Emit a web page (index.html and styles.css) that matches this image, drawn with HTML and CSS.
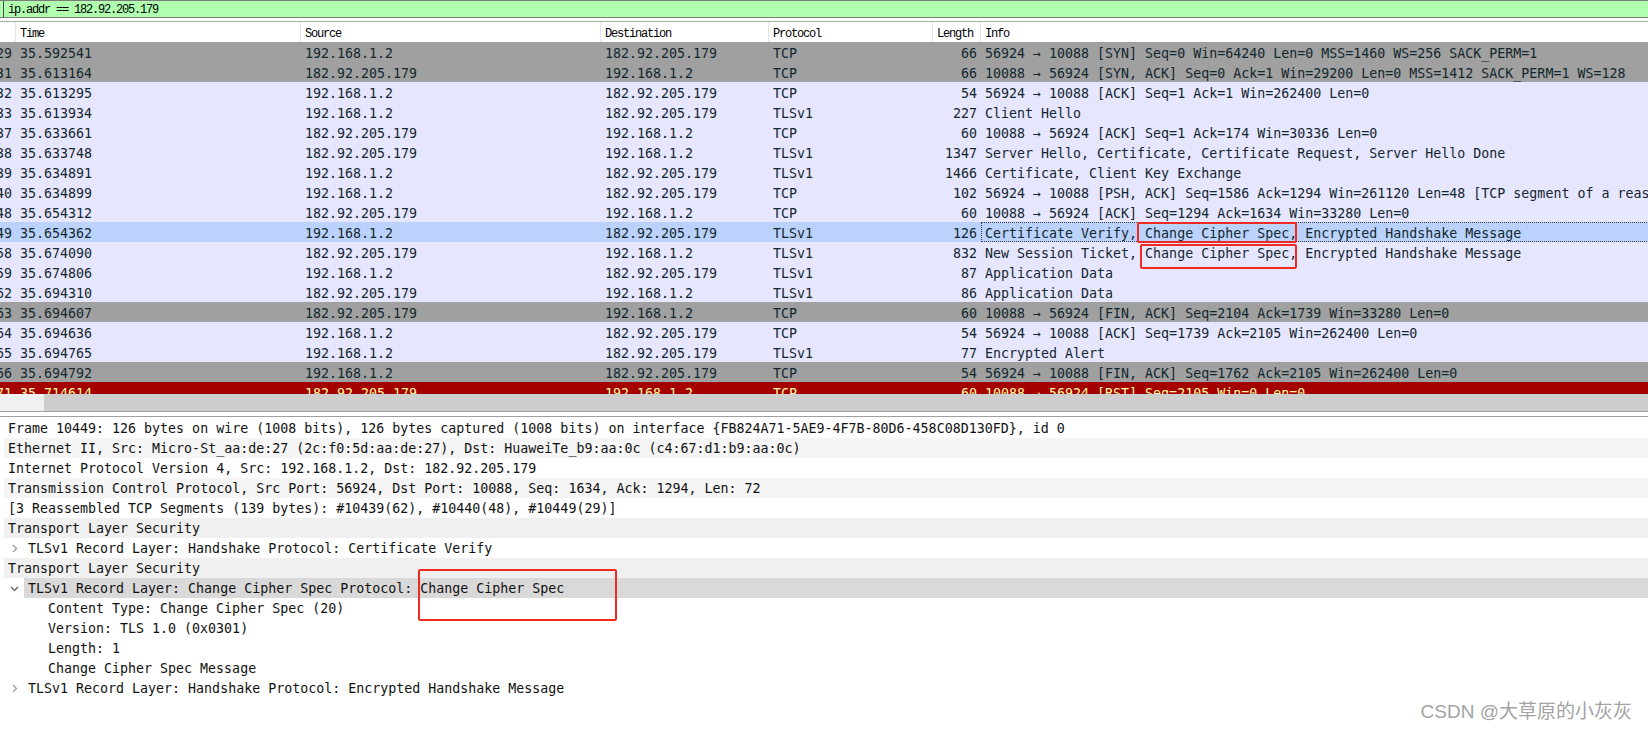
FILE: index.html
```html
<!DOCTYPE html>
<html>
<head>
<meta charset="utf-8">
<title>Wireshark</title>
<link rel="stylesheet" href="styles.css">
</head>
<body>
<div class="filter"><span class="filter-edge"></span><span class="filter-text">ip.addr == 182.92.205.179</span></div>
<div class="spacer"></div>
<div class="list">
  <div class="header">
    <div class="hc c-no"></div>
    <div class="hc c-time">Time</div>
    <div class="hc c-src">Source</div>
    <div class="hc c-dst">Destination</div>
    <div class="hc c-proto">Protocol</div>
    <div class="hc c-len">Length</div>
    <div class="hc c-info">Info</div>
  </div>
  <div class="rows">
    <div class="row gray"><div class="c-no"><span>10429</span></div><div class="c-time">35.592541</div><div class="c-src">192.168.1.2</div><div class="c-dst">182.92.205.179</div><div class="c-proto">TCP</div><div class="c-len">66</div><div class="c-info">56924 → 10088 [SYN] Seq=0 Win=64240 Len=0 MSS=1460 WS=256 SACK_PERM=1</div></div>
    <div class="row gray"><div class="c-no"><span>10431</span></div><div class="c-time">35.613164</div><div class="c-src">182.92.205.179</div><div class="c-dst">192.168.1.2</div><div class="c-proto">TCP</div><div class="c-len">66</div><div class="c-info">10088 → 56924 [SYN, ACK] Seq=0 Ack=1 Win=29200 Len=0 MSS=1412 SACK_PERM=1 WS=128</div></div>
    <div class="row light"><div class="c-no"><span>10432</span></div><div class="c-time">35.613295</div><div class="c-src">192.168.1.2</div><div class="c-dst">182.92.205.179</div><div class="c-proto">TCP</div><div class="c-len">54</div><div class="c-info">56924 → 10088 [ACK] Seq=1 Ack=1 Win=262400 Len=0</div></div>
    <div class="row light"><div class="c-no"><span>10433</span></div><div class="c-time">35.613934</div><div class="c-src">192.168.1.2</div><div class="c-dst">182.92.205.179</div><div class="c-proto">TLSv1</div><div class="c-len">227</div><div class="c-info">Client Hello</div></div>
    <div class="row light"><div class="c-no"><span>10437</span></div><div class="c-time">35.633661</div><div class="c-src">182.92.205.179</div><div class="c-dst">192.168.1.2</div><div class="c-proto">TCP</div><div class="c-len">60</div><div class="c-info">10088 → 56924 [ACK] Seq=1 Ack=174 Win=30336 Len=0</div></div>
    <div class="row light"><div class="c-no"><span>10438</span></div><div class="c-time">35.633748</div><div class="c-src">182.92.205.179</div><div class="c-dst">192.168.1.2</div><div class="c-proto">TLSv1</div><div class="c-len">1347</div><div class="c-info">Server Hello, Certificate, Certificate Request, Server Hello Done</div></div>
    <div class="row light"><div class="c-no"><span>10439</span></div><div class="c-time">35.634891</div><div class="c-src">192.168.1.2</div><div class="c-dst">182.92.205.179</div><div class="c-proto">TLSv1</div><div class="c-len">1466</div><div class="c-info">Certificate, Client Key Exchange</div></div>
    <div class="row light"><div class="c-no"><span>10440</span></div><div class="c-time">35.634899</div><div class="c-src">192.168.1.2</div><div class="c-dst">182.92.205.179</div><div class="c-proto">TCP</div><div class="c-len">102</div><div class="c-info">56924 → 10088 [PSH, ACK] Seq=1586 Ack=1294 Win=261120 Len=48 [TCP segment of a reassembled PDU]</div></div>
    <div class="row light"><div class="c-no"><span>10448</span></div><div class="c-time">35.654312</div><div class="c-src">182.92.205.179</div><div class="c-dst">192.168.1.2</div><div class="c-proto">TCP</div><div class="c-len">60</div><div class="c-info">10088 → 56924 [ACK] Seq=1294 Ack=1634 Win=33280 Len=0</div></div>
    <div class="row sel"><div class="c-no"><span>10449</span></div><div class="c-time">35.654362</div><div class="c-src">192.168.1.2</div><div class="c-dst">182.92.205.179</div><div class="c-proto">TLSv1</div><div class="c-len">126</div><div class="c-info">Certificate Verify, Change Cipher Spec, Encrypted Handshake Message</div></div>
    <div class="row light"><div class="c-no"><span>10458</span></div><div class="c-time">35.674090</div><div class="c-src">182.92.205.179</div><div class="c-dst">192.168.1.2</div><div class="c-proto">TLSv1</div><div class="c-len">832</div><div class="c-info">New Session Ticket, Change Cipher Spec, Encrypted Handshake Message</div></div>
    <div class="row light"><div class="c-no"><span>10459</span></div><div class="c-time">35.674806</div><div class="c-src">192.168.1.2</div><div class="c-dst">182.92.205.179</div><div class="c-proto">TLSv1</div><div class="c-len">87</div><div class="c-info">Application Data</div></div>
    <div class="row light"><div class="c-no"><span>10462</span></div><div class="c-time">35.694310</div><div class="c-src">182.92.205.179</div><div class="c-dst">192.168.1.2</div><div class="c-proto">TLSv1</div><div class="c-len">86</div><div class="c-info">Application Data</div></div>
    <div class="row gray"><div class="c-no"><span>10463</span></div><div class="c-time">35.694607</div><div class="c-src">182.92.205.179</div><div class="c-dst">192.168.1.2</div><div class="c-proto">TCP</div><div class="c-len">60</div><div class="c-info">10088 → 56924 [FIN, ACK] Seq=2104 Ack=1739 Win=33280 Len=0</div></div>
    <div class="row light"><div class="c-no"><span>10464</span></div><div class="c-time">35.694636</div><div class="c-src">192.168.1.2</div><div class="c-dst">182.92.205.179</div><div class="c-proto">TCP</div><div class="c-len">54</div><div class="c-info">56924 → 10088 [ACK] Seq=1739 Ack=2105 Win=262400 Len=0</div></div>
    <div class="row light"><div class="c-no"><span>10465</span></div><div class="c-time">35.694765</div><div class="c-src">192.168.1.2</div><div class="c-dst">182.92.205.179</div><div class="c-proto">TLSv1</div><div class="c-len">77</div><div class="c-info">Encrypted Alert</div></div>
    <div class="row gray"><div class="c-no"><span>10466</span></div><div class="c-time">35.694792</div><div class="c-src">192.168.1.2</div><div class="c-dst">182.92.205.179</div><div class="c-proto">TCP</div><div class="c-len">54</div><div class="c-info">56924 → 10088 [FIN, ACK] Seq=1762 Ack=2105 Win=262400 Len=0</div></div>
    <div class="row red"><div class="c-no"><span>10471</span></div><div class="c-time">35.714614</div><div class="c-src">182.92.205.179</div><div class="c-dst">192.168.1.2</div><div class="c-proto">TCP</div><div class="c-len">60</div><div class="c-info">10088 → 56924 [RST] Seq=2105 Win=0 Len=0</div></div>
  </div>
  <div class="hscroll"><div class="thumb"></div></div>
</div>
<div class="sep"></div>
<div class="details">
  <div class="drow">Frame 10449: 126 bytes on wire (1008 bits), 126 bytes captured (1008 bits) on interface {FB824A71-5AE9-4F7B-80D6-458C08D130FD}, id 0</div>
  <div class="drow alt">Ethernet II, Src: Micro-St_aa:de:27 (2c:f0:5d:aa:de:27), Dst: HuaweiTe_b9:aa:0c (c4:67:d1:b9:aa:0c)</div>
  <div class="drow">Internet Protocol Version 4, Src: 192.168.1.2, Dst: 182.92.205.179</div>
  <div class="drow alt">Transmission Control Protocol, Src Port: 56924, Dst Port: 10088, Seq: 1634, Ack: 1294, Len: 72</div>
  <div class="drow">[3 Reassembled TCP Segments (139 bytes): #10439(62), #10440(48), #10449(29)]</div>
  <div class="drow tls">Transport Layer Security</div>
  <div class="drow l1"><span class="tw"><svg width="6" height="9" viewBox="0 0 6 9"><path d="M1 1 L4.5 4.5 L1 8" fill="none" stroke="#9a9a9a" stroke-width="1.2"/></svg></span><span class="dtext">TLSv1 Record Layer: Handshake Protocol: Certificate Verify</span></div>
  <div class="drow tls">Transport Layer Security</div>
  <div class="drow l1"><span class="tw"><svg width="9" height="6" viewBox="0 0 9 6"><path d="M1 1 L4.5 4.5 L8 1" fill="none" stroke="#555" stroke-width="1.2"/></svg></span><span class="dtext selected">TLSv1 Record Layer: Change Cipher Spec Protocol: Change Cipher Spec</span></div>
  <div class="drow l2">Content Type: Change Cipher Spec (20)</div>
  <div class="drow l2">Version: TLS 1.0 (0x0301)</div>
  <div class="drow l2">Length: 1</div>
  <div class="drow l2">Change Cipher Spec Message</div>
  <div class="drow l1"><span class="tw"><svg width="6" height="9" viewBox="0 0 6 9"><path d="M1 1 L4.5 4.5 L1 8" fill="none" stroke="#9a9a9a" stroke-width="1.2"/></svg></span><span class="dtext">TLSv1 Record Layer: Handshake Protocol: Encrypted Handshake Message</span></div>
</div>
<div class="mark m1"></div>
<div class="mark m2"></div>
<div class="mark m3"></div>
<div class="watermark">CSDN @大草原的小灰灰</div>
</body>
</html>
```
FILE: styles.css
```css
* { box-sizing: border-box; }
html, body { margin: 0; padding: 0; }
body {
  width: 1648px;
  height: 731px;
  overflow: hidden;
  background: #ffffff;
  position: relative;
  font-family: "DejaVu Sans Mono", monospace;
}

/* display filter */
.filter {
  height: 18px;
  background: #afffaf;
  border-top: 1px solid #7c7c7c;
  border-bottom: 1px solid #7c7c7c;
  display: flex;
  align-items: center;
}
.filter-edge {
  width: 4px;
  align-self: stretch;
  border-right: 1px solid #4a4a4a;
}
.filter-text {
  font-family: "Liberation Mono", monospace;
  font-size: 12px;
  letter-spacing: -1.2px;
  padding-left: 4px;
  padding-top: 2px;
  color: #000;
}
.spacer { height: 3px; }

/* packet list */
.list {
  border-top: 1px solid #a9a9a9;
  width: 1648px;
  overflow: hidden;
}
.header {
  display: flex;
  height: 20px;
  width: 1800px;
  font-family: "Liberation Mono", monospace;
  font-size: 12px;
  letter-spacing: -1.2px;
  color: #000;
}
.hc {
  height: 20px;
  display: flex;
  align-items: center;
  padding-left: 4px;
  padding-top: 4px;
  border-right: 1px solid #e5e5e5;
}
.c-no { width: 16px; flex: none; }
.c-time { width: 285px; flex: none; padding-left: 4px; }
.c-src { width: 300px; flex: none; padding-left: 4px; }
.c-dst { width: 168px; flex: none; padding-left: 4px; }
.c-proto { width: 164px; flex: none; padding-left: 4px; }
.c-len { width: 48px; flex: none; }
.c-info { width: 900px; flex: none; padding-left: 4px; }
.header .c-len { padding-left: 4px; }

.rows {
  height: 352px;
  overflow: hidden;
}
.row {
  display: flex;
  align-items: flex-start;
  height: 20px;
  width: 1800px;
  font-size: 13.3px;
  white-space: nowrap;
  color: #12272e;
}
.row > div { height: 20px; line-height: 23px; overflow: hidden; }
.row .c-no {
  display: flex;
  justify-content: flex-end;
  padding-right: 4px;
}
.row .c-len { text-align: right; padding-right: 4px; }
.row.gray { background: #a0a0a0; }
.row.light { background: #e7e6ff; }
.row.sel { background: #bbd3fc; }
.row.sel .c-info { outline: 1px dotted #3a3a3a; outline-offset: -1px; }
.row.red { background: #a40000; color: #fffc9c; }

.hscroll {
  height: 17px;
  background: #f0f0f0;
  display: flex;
}
.thumb {
  margin-left: 44px;
  flex: 1;
  background: #cdcdcd;
}
.sep {
  height: 5px;
  border-top: 1px solid #a0a0a0;
}

/* packet details */
.details {
  border-top: 1px solid #a0a0a0;
  padding-top: 1px;
  padding-left: 4px;
}
.drow {
  height: 20px;
  line-height: 22px;
  display: flex;
  align-items: flex-start;
  padding-left: 4px;
  font-size: 13.3px;
  white-space: nowrap;
  color: #111;
}
.drow.alt { background: #f5f5f5; }
.drow.tls { background: #f0f0f0; }
.drow.l1 { padding-left: 0; }
.drow.l2 { padding-left: 44px; }
.tw {
  width: 20px;
  height: 20px;
  flex: none;
  display: flex;
  align-items: center;
  justify-content: center;
  padding-left: 1px;
  padding-top: 1px;
}
.dtext {
  padding-left: 4px;
  height: 20px;
  line-height: 22px;
  flex: 1;
}
.dtext.selected { background: #d9d9d9; }

/* annotations */
.mark {
  position: absolute;
  border: 2px solid #ef2a20;
  border-radius: 2px;
}
.m1 { left: 1137px; top: 222px; width: 160px; height: 21px; }
.m2 { left: 1140px; top: 244px; width: 157px; height: 25px; }
.m3 { left: 418px; top: 569px; width: 199px; height: 52px; }

.watermark {
  position: absolute;
  right: 16px;
  top: 700px;
  font-family: "Liberation Sans", "Noto Sans CJK SC", sans-serif;
  font-size: 19px;
  line-height: 24px;
  color: #a3a3a3;
}
```
